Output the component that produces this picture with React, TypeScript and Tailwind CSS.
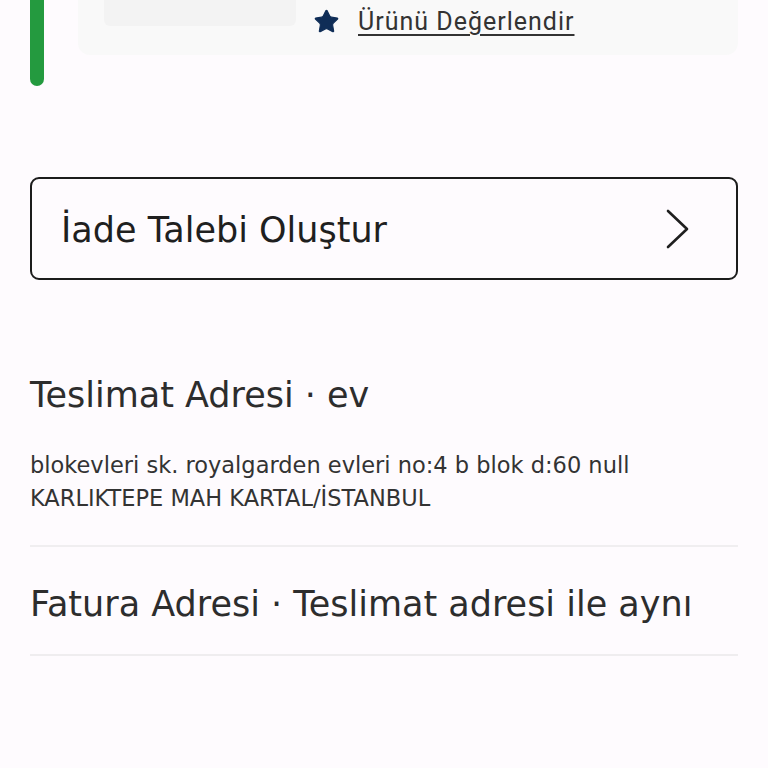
import { Star } from 'lucide-react';

function ChevronRight() {
  return (
    <svg width="24" height="40" viewBox="0 0 24 40" fill="none" stroke="#1f1f1f" strokeWidth="2.6" strokeLinecap="round" strokeLinejoin="round">
      <path d="M2 2 L21 20 L2 38" />
    </svg>
  );
}

export default function App() {
  return (
    <div className="min-h-[768px] w-[768px] bg-[#fefbfe] text-[#2b2b2b]" style={{ fontFamily: '"DejaVu Sans", "Noto Sans", sans-serif' }}>
      <div className="flex items-start">
        <div className="ml-[30px] h-[86px] w-[14px] rounded-b-full bg-[#249a3f]" />
        <div className="ml-[34px] mr-[30px] flex h-[55px] flex-1 items-start rounded-b-xl bg-[#f9f9f9] pl-[26px]">
          <div className="h-[26px] w-[192px] rounded-b-md bg-[#f3f3f3]" />
          <div className="ml-[17px] mt-[8px] flex items-center gap-[18px]">
            <Star className="h-[27px] w-[27px] fill-[#0f2d57] text-[#0f2d57]" strokeWidth={1} />
            <span className="text-[25px] leading-none tracking-[1px] text-[#333] underline decoration-[1.5px] underline-offset-[4px]" style={{ fontFamily: 'Roboto, sans-serif' }}>
              Ürünü Değerlendir
            </span>
          </div>
        </div>
      </div>

      <div className="mx-[30px] mt-[91px] flex h-[103px] items-center justify-between rounded-[9px] border-2 border-[#1c1c1c] pl-[29px] pr-[46px]">
        <span className="pt-[3px] text-[35px] text-[#1f1f1f]">İade Talebi Oluştur</span>
        <ChevronRight />
      </div>

      <div className="mx-[30px] mt-[92px]">
        <h2 className="text-[35px] leading-[46px] text-[#2d2d2d]">Teslimat Adresi · ev</h2>
        <p className="mt-[31px] text-[22.5px] leading-[33px] text-[#333]">
          blokevleri sk. royalgarden evleri no:4 b blok d:60 null
          <br />
          KARLIKTEPE MAH KARTAL/İSTANBUL
        </p>
        <div className="mt-[30px] h-[2px] bg-[#f0eef0]" />
        <h2 className="pt-[36px] pb-[29px] text-[35px] leading-[42px] text-[#2d2d2d]">Fatura Adresi · Teslimat adresi ile aynı</h2>
        <div className="h-[2px] bg-[#efedef]" />
      </div>
    </div>
  );
}
